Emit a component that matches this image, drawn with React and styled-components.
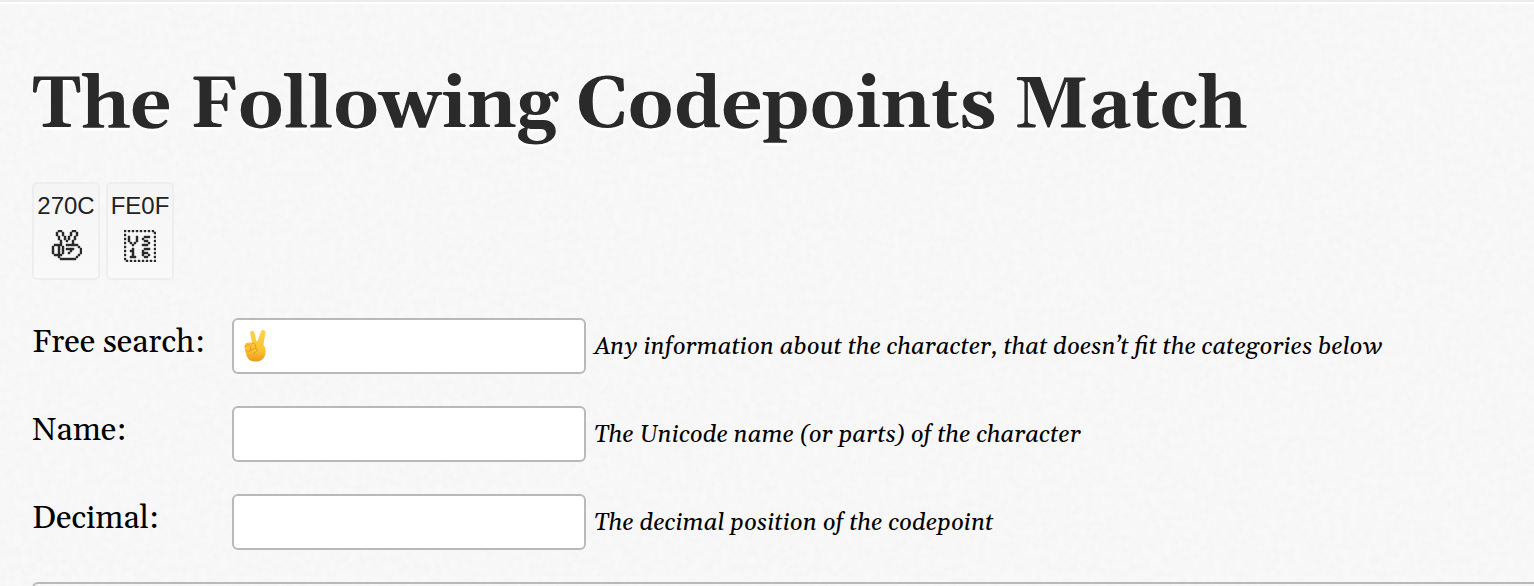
import React from "react";
import styled, { createGlobalStyle } from "styled-components";

const GlobalStyle = createGlobalStyle`
  * { box-sizing: border-box; }
  body {
    margin: 0;
    height: 586px;
    overflow: hidden;
    background: #f7f7f7;
    color: #000;
    font-family: Georgia, Gelasio, "Liberation Serif", serif;
  }
`;

const Paper = styled.svg`
  position: absolute;
  inset: 0;
  width: 100%;
  height: 100%;
  z-index: -1;
`;

const Page = styled.main`
  height: 586px;
  overflow: hidden;
  padding: 0 0 0 32px;
`;

const TopRule = styled.div`
  height: 4px;
  margin-left: -32px;
  border-top: 2px solid #ececec;
  border-bottom: 2px solid #fff;
`;

const Title = styled.h1`
  margin: 58px 0 0;
  height: 88px;
  line-height: 88px;
  font-size: 72px;
  font-weight: bold;
  color: #2a2a2a;
  text-shadow: 0 2px 2px #fff, 0 3px 2px #fff;
  white-space: nowrap;
`;

const Codepoints = styled.ul`
  display: flex;
  gap: 6px;
  list-style: none;
  margin: 32px 0 38px;
  padding: 0;
`;

const Codepoint = styled.li`
  display: flex;
  flex-direction: column;
  align-items: center;
  width: 68px;
  height: 98px;
  padding-top: 7px;
  border: 2px solid #eeeeee;
  border-radius: 5px;
  background: linear-gradient(#f5f5f5, #f9f9f9);
  color: #222;
  font: 24px/30px "Liberation Sans", Arial, sans-serif;
`;

const Bitmap = styled.svg`
  width: 32px;
  height: 32px;
  margin-top: 9px;
`;

const Field = styled.div`
  display: flex;
  height: 56px;
  margin-bottom: 32px;
`;

const Label = styled.label`
  width: 200px;
  font-size: 32px;
  line-height: 50px;
  white-space: nowrap;
`;

const Input = styled.div`
  width: 354px;
  height: 56px;
  padding: 9px 10px;
  border: 2px solid #b9b9b9;
  border-radius: 6px;
  background: #fff;
`;

const Hint = styled.em`
  margin-left: 8px;
  font-size: 24px;
  line-height: 59px;
  white-space: nowrap;
`;

const Results = styled.div`
  height: 30px;
  border: 2px solid #b9b9b9;
  border-right: 0;
  border-radius: 6px 0 0 0;
`;

const HAND = [
  "....##.....##...",
  "...#..#...#..#..",
  "...#..#...#..#..",
  "....#..#.#..#...",
  "....#..#.#..#...",
  ".....#..#..#....",
  ".....#.....#....",
  "..####..######..",
  ".#..#.#.......#.",
  ".#..#.#.####...#",
  ".#..#.#...#....#",
  ".#..#.#..#.....#",
  "..####........#.",
  "....#........#..",
  ".....########...",
  "................",
];

const SELECTOR = [
  "#.#.#.#.#.#.#.#.",
  "...............#",
  "#...............",
  "..#...#...###..#",
  "#.#...#..#......",
  "..#...#...##...#",
  "#..#.#......#...",
  "....#....###...#",
  "#...............",
  "....#.....###..#",
  "#..##....#......",
  "....#....###...#",
  "#...#....#..#...",
  "...###....##...#",
  "#...............",
  ".#.#.#.#.#.#.#.#",
];

function Glyph({ rows }) {
  return (
    <Bitmap viewBox="0 0 16 16" fill="#2c2c2c" stroke="#2c2c2c" strokeWidth="0.22" strokeLinejoin="round">
      {rows.flatMap((row, y) =>
        [...row].map((c, x) => c === "#" && <rect key={`${x}-${y}`} x={x} y={y} width="1" height="1" />)
      )}
    </Bitmap>
  );
}

function Victory() {
  return (
    <svg width="24" height="34" viewBox="0 0 24 34" role="img" aria-label="Victory hand">
      <defs>
        <linearGradient id="skin" x1="0" y1="0" x2="0" y2="1">
          <stop offset="0" stopColor="#ffd34a" />
          <stop offset="0.65" stopColor="#fbc233" />
          <stop offset="1" stopColor="#e89a1c" />
        </linearGradient>
      </defs>
      <path d="M8 14 6.2 4C5.9 1.2 9.6.8 10.3 3.4L12.4 12h1.2L17 2.6C18 0 22 .9 21.4 4L19.3 16c2.4 2.6 2.9 6.5 1.6 10.5C19.6 30.7 16 32.5 11.6 32.5c-4.5 0-7.6-1.8-8.9-5.3L.7 20C0 15.8 1 13.6 4 13.8c1.3-1 3-.8 4 .2Z" fill="url(#skin)" />
      <path d="M7.2 15.3c1.6-2 4.2-1 4.4 1.2v1.6M1.6 17.5c1-2.5 4.6-2 5.1.3v2.8M2.3 21.8c2.7 1 5.7-.2 7.5-2.2 2.5-1.3 4.7.6 2.9 2.4l-3 2.7" fill="none" stroke="#dc9420" strokeWidth="0.9" strokeLinecap="round" />
    </svg>
  );
}

const FIELDS = [
  { label: "Free search:", hint: "Any information about the character, that doesn’t fit the categories below", content: <Victory /> },
  { label: "Name:", hint: "The Unicode name (or parts) of the character" },
  { label: "Decimal:", hint: "The decimal position of the codepoint" },
];

export default function App() {
  return (
    <>
      <GlobalStyle />
      <Paper aria-hidden="true">
        <filter id="grain">
          <feTurbulence type="fractalNoise" baseFrequency="0.14" numOctaves="3" seed="4" />
          <feColorMatrix values="0 0 0 0 1  0 0 0 0 1  0 0 0 0 1  1.6 0 0 0 -0.45" />
        </filter>
        <rect width="100%" height="100%" fill="#f6f6f6" />
        <rect width="100%" height="100%" filter="url(#grain)" opacity="0.35" />
      </Paper>
      <Page>
        <TopRule />
        <Title>The Following Codepoints Match</Title>
        <Codepoints>
          <Codepoint>270C<Glyph rows={HAND} /></Codepoint>
          <Codepoint>FE0F<Glyph rows={SELECTOR} /></Codepoint>
        </Codepoints>
        {FIELDS.map((f) => (
          <Field key={f.label}>
            <Label>{f.label}</Label>
            <Input>{f.content}</Input>
            <Hint>{f.hint}</Hint>
          </Field>
        ))}
        <Results />
      </Page>
    </>
  );
}
